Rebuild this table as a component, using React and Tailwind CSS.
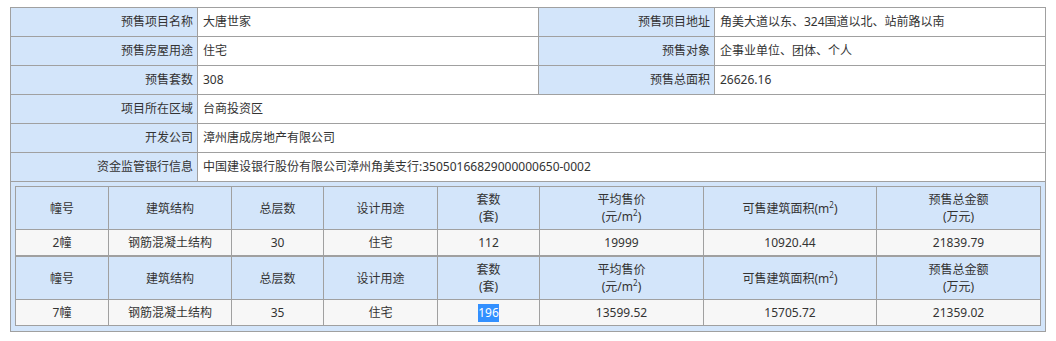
import React from "react";

const FONT = { fontFamily: '"Noto Sans", "Noto Sans CJK SC", sans-serif' };

function Label({ w, children }) {
  return (
    <div className={`${w} h-full shrink-0 border-r border-[#a0a0a0] bg-[#d3e5fa] flex items-center justify-end pr-[4px]`}>
      {children}
    </div>
  );
}

function Value({ w, children }) {
  return (
    <div className={`${w} h-full shrink-0 border-r border-[#a0a0a0] bg-white flex items-center pl-[5px]`}>
      {children}
    </div>
  );
}

function Row({ children }) {
  return <div className="flex h-[29px] border-b border-[#a0a0a0]">{children}</div>;
}

const COLS = ["w-[93px]", "w-[123px]", "w-[92px]", "w-[114px]", "w-[102px]", "w-[164px]", "w-[173px]", "w-[164px]"];

function M2() {
  return (
    <>
      m<sup className="text-[8px] relative -top-[5px]">2</sup>
    </>
  );
}

function Building({ data }) {
  const headers = [
    "幢号",
    "建筑结构",
    "总层数",
    "设计用途",
    <>套数<br />(套)</>,
    <>平均售价<br />(元/<M2 />)</>,
    <>可售建筑面积(<M2 />)</>,
    <>预售总金额<br />(万元)</>,
  ];
  return (
    <div className="border-l border-t border-[#a0a0a0]">
      <div className="flex h-[43px] border-b border-[#a0a0a0] bg-[#d3e5fa]">
        {headers.map((h, i) => (
          <div key={i} className={`${COLS[i]} shrink-0 h-full border-r border-[#a0a0a0] flex items-center justify-center text-center leading-[17px]`}>
            <div>{h}</div>
          </div>
        ))}
      </div>
      <div className="flex h-[26px] border-b border-[#a0a0a0] bg-[#f7f7f7]">
        {data.map((d, i) => (
          <div key={i} className={`${COLS[i]} shrink-0 h-full border-r border-[#a0a0a0] flex items-center justify-center`}>
            {d}
          </div>
        ))}
      </div>
    </div>
  );
}

export default function App() {
  return (
    <div className="bg-white w-[1056px] h-[341px] pt-[7px] pl-[10px] text-[12px] text-[#333]" style={FONT}>
      <div className="w-[1036px] border-l border-t border-[#a0a0a0]">
        <Row>
          <Label w="w-[187px]">预售项目名称</Label>
          <Value w="w-[341px]">大唐世家</Value>
          <Label w="w-[176px]">预售项目地址</Label>
          <Value w="w-[331px]">角美大道以东、324国道以北、站前路以南</Value>
        </Row>
        <Row>
          <Label w="w-[187px]">预售房屋用途</Label>
          <Value w="w-[341px]">住宅</Value>
          <Label w="w-[176px]">预售对象</Label>
          <Value w="w-[331px]">企事业单位、团体、个人</Value>
        </Row>
        <Row>
          <Label w="w-[187px]">预售套数</Label>
          <Value w="w-[341px]">308</Value>
          <Label w="w-[176px]">预售总面积</Label>
          <Value w="w-[331px]">26626.16</Value>
        </Row>
        <Row>
          <Label w="w-[187px]">项目所在区域</Label>
          <Value w="w-[848px]">台商投资区</Value>
        </Row>
        <Row>
          <Label w="w-[187px]">开发公司</Label>
          <Value w="w-[848px]">漳州唐成房地产有限公司</Value>
        </Row>
        <Row>
          <Label w="w-[187px]">资金监管银行信息</Label>
          <Value w="w-[848px]">中国建设银行股份有限公司漳州角美支行:35050166829000000650-0002</Value>
        </Row>
        <div className="h-[150px] border-b border-r border-[#a0a0a0] bg-[#d3e5fa] p-[4px]">
          <Building data={["2幢", "钢筋混凝土结构", "30", "住宅", "112", "19999", "10920.44", "21839.79"]} />
          <Building
            data={[
              "7幢",
              "钢筋混凝土结构",
              "35",
              "住宅",
              <span className="bg-[#3390ff] text-white">196</span>,
              "13599.52",
              "15705.72",
              "21359.02",
            ]}
          />
        </div>
      </div>
    </div>
  );
}
